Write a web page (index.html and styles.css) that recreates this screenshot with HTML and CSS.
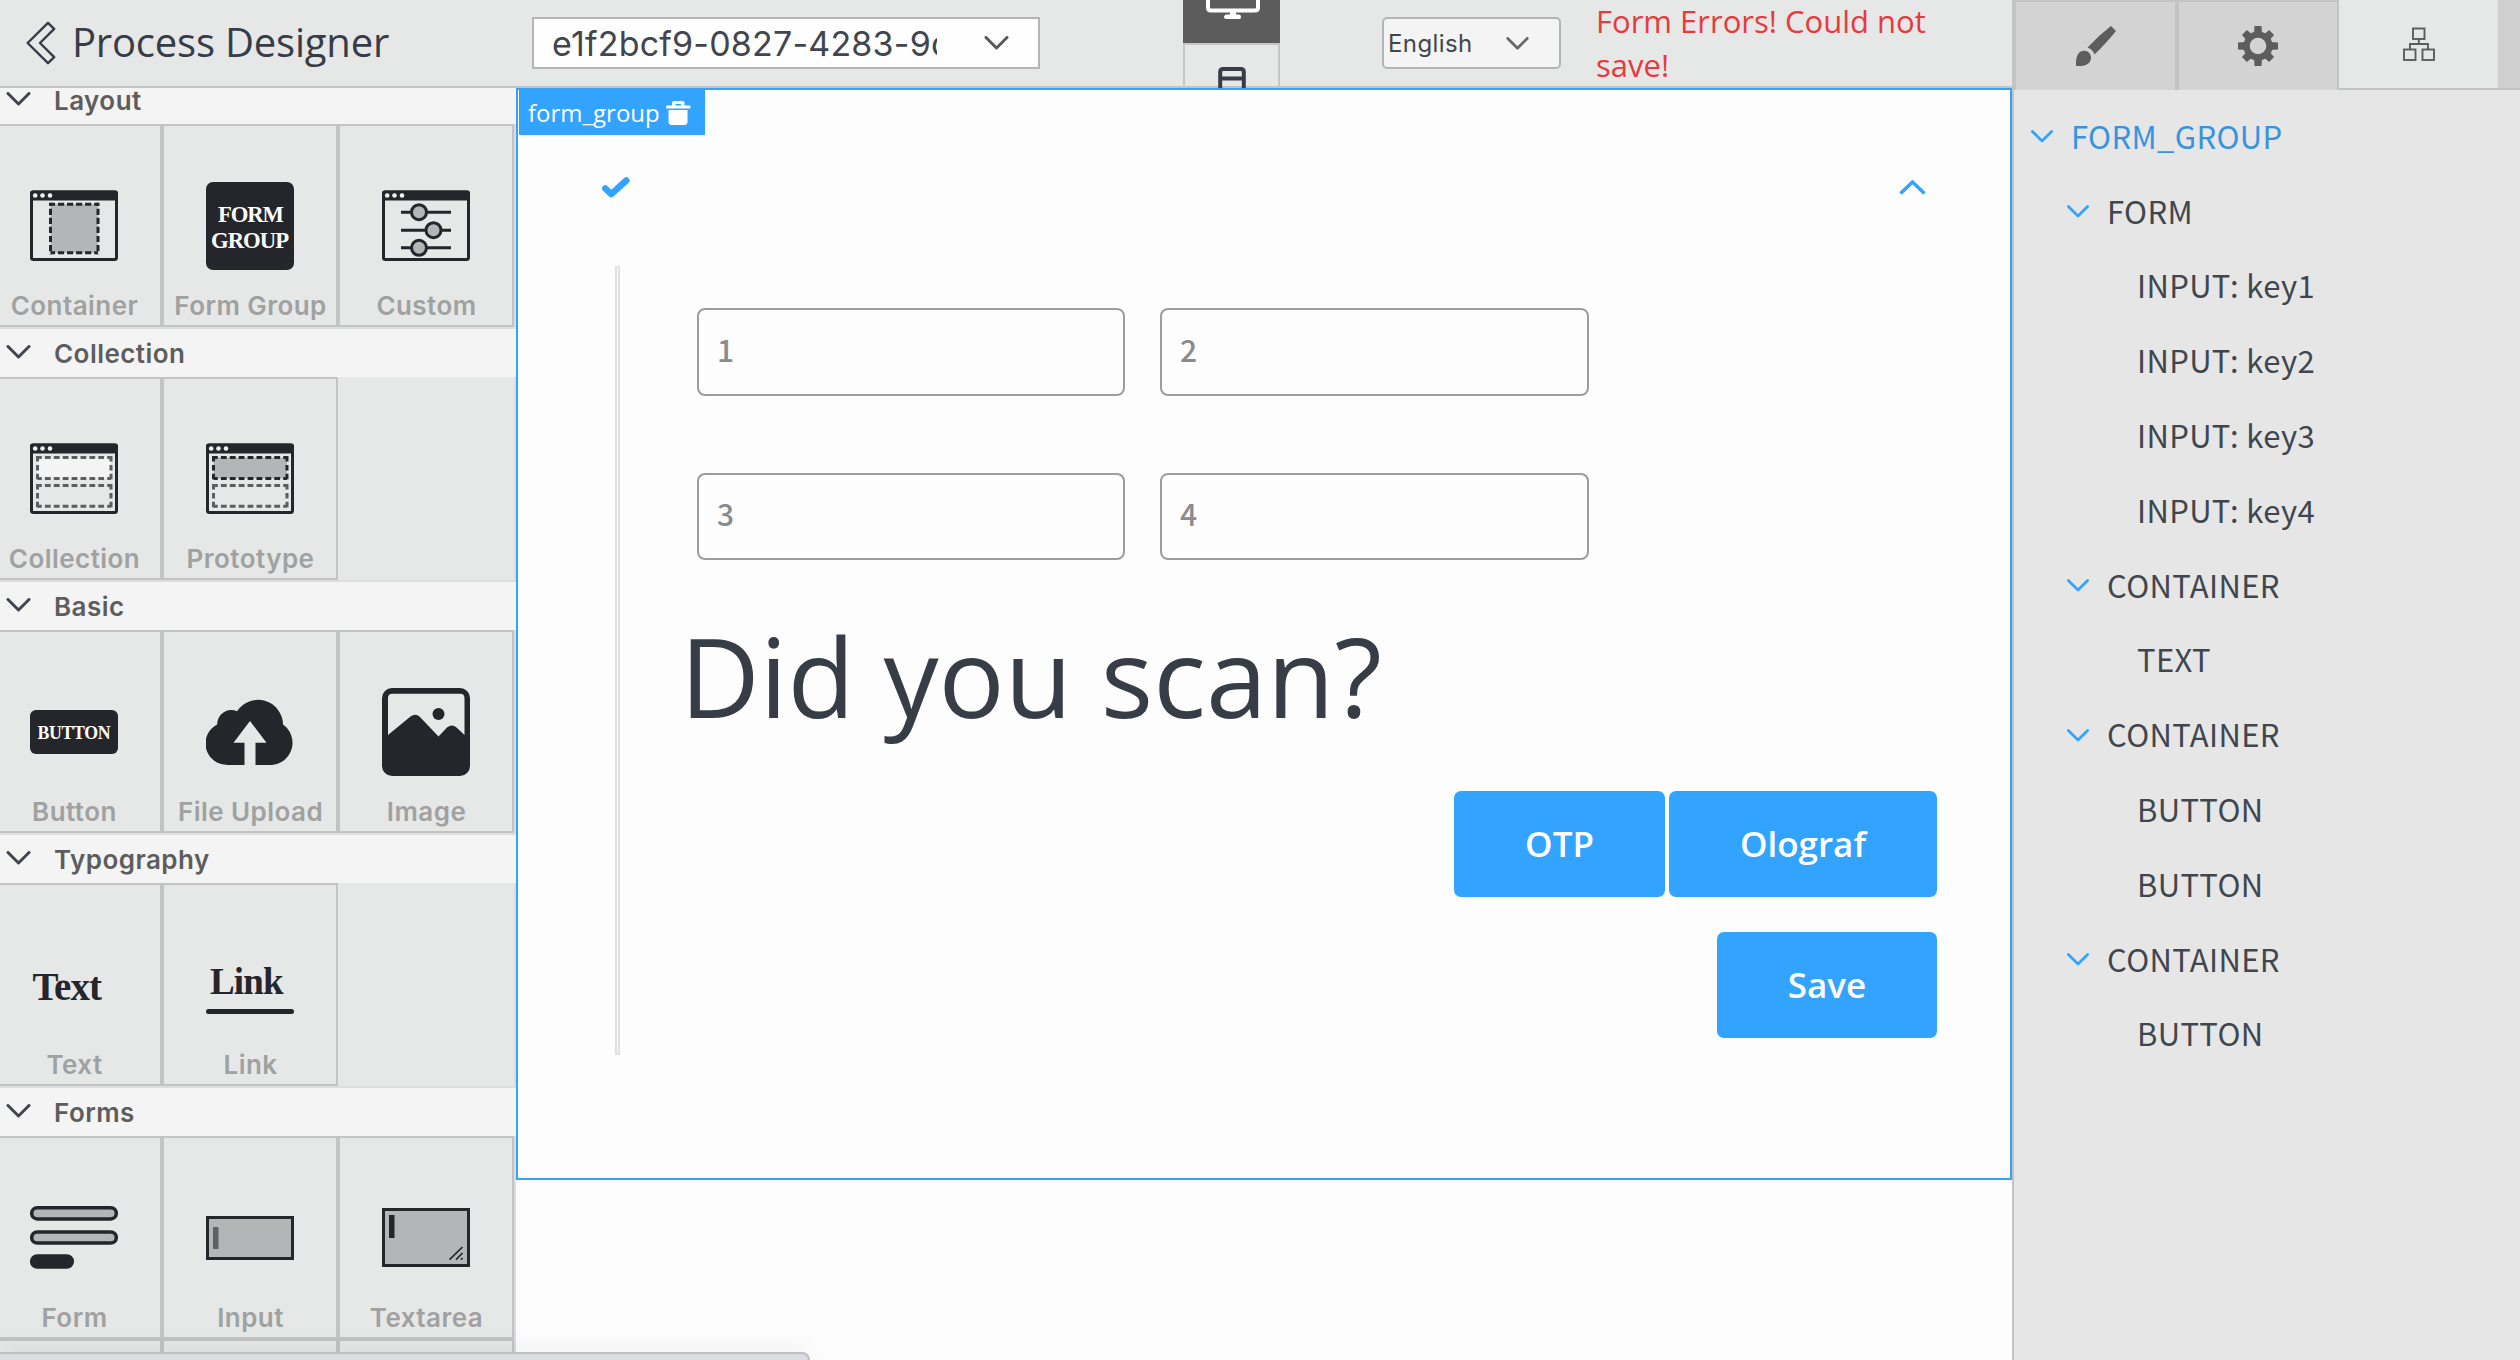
FILE: index.html
```html
<!DOCTYPE html>
<html lang="en">
<head>
<meta charset="utf-8">
<title>Process Designer</title>
<link rel="stylesheet" href="styles.css">
</head>
<body>
<svg class="sprite" aria-hidden="true">
  <symbol id="chevron" viewBox="0 0 24 14"><path d="M1.5 1.5 12 12 22.5 1.5" fill="none" stroke="currentColor" stroke-width="3" stroke-linecap="round" stroke-linejoin="round"/></symbol>
  <symbol id="window" viewBox="0 0 88 88">
    <rect x="1.5" y="10" width="85" height="67.500" rx="2" fill="none" stroke="#25262b" stroke-width="3"/>
    <path d="M0 18.500V11Q0 8.500 2.500 8.500H85.500Q88 8.500 88 11V18.500Z" fill="#25262b"/>
    <g fill="#f2f2f2"><circle cx="5.200" cy="13.500" r="2.300"/><circle cx="12.500" cy="13.500" r="2.300"/><circle cx="20" cy="13.500" r="2.300"/></g>
  </symbol>
</svg>
<div class="app">
  <div class="main">
    <header class="topbar">
      <svg class="back" viewBox="0 0 30 44"><path d="M22 1.800 28.200 7.800 14 22 28.200 36.200 22 42.200 1.600 22Z" fill="none" stroke="#373d47" stroke-width="2.400" stroke-linejoin="round"/></svg>
      <h1 class="title">Process Designer</h1>
      <div class="select process-select"><span class="select-text">e1f2bcf9-0827-4283-9c4a</span><svg class="chev"><use href="#chevron"/></svg></div>
      <div class="devices">
        <div class="device active"><svg viewBox="0 0 54 20" width="54" height="20"><path d="M2 0V7.500Q2 10.500 5 10.500H49Q52 10.500 52 7.500V0" fill="none" stroke="#fff" stroke-width="4"/><path d="M24 12H30V14.500H33Q35 14.500 35 17T33 19H21Q18 19 18 17T21 14.500H24Z" fill="#fff"/></svg></div>
        <div class="device"><svg viewBox="0 0 28 21" width="28" height="21"><path d="M2.200 21V5Q2.200 2 5.200 2H22.800Q25.800 2 25.800 5V21M2 11.500H26" fill="none" stroke="#373d47" stroke-width="4"/></svg></div>
      </div>
      <div class="select lang-select"><span>English</span><svg class="chev"><use href="#chevron"/></svg></div>
      <p class="error">Form Errors! Could not save!</p>
    </header>
    <div class="workspace">
      <aside class="palette">
        <section class="group">
          <h2 class="group-title"><svg class="chev"><use href="#chevron"/></svg>Layout</h2>
          <div class="cells">
            <div class="cell"><svg class="icon"><use href="#window"/><rect x="20.500" y="22.200" width="47.500" height="48.500" fill="#b4b5b6"/><path d="M20.500 22.200H68M20.500 70.700H68" stroke="#25262b" stroke-width="3" stroke-dasharray="6.200 2.850" stroke-dashoffset="1.600"/><path d="M20.500 20.700V72.200M68 20.700V72.200" stroke="#25262b" stroke-width="3" stroke-dasharray="6.200 2.850" stroke-dashoffset="3"/></svg><span>Container</span></div>
            <div class="cell"><svg class="icon"><rect width="88" height="88" rx="7" fill="#25262b"/><g class="glyph-light"><text x="12" y="40.300" font-size="22.700" textLength="66">FORM</text><text x="5" y="66" font-size="22.700" textLength="78">GROUP</text></g></svg><span>Form Group</span></div>
            <div class="cell"><svg class="icon"><use href="#window"/><g fill="#b4b5b6" stroke="#25262b" stroke-width="3"><path d="M19 30.200H69M19 48.200H69M19 65.800H69"/><circle cx="37" cy="30.200" r="7.500"/><circle cx="51.500" cy="48.200" r="7.500"/><circle cx="37" cy="65.800" r="7.500"/></g></svg><span>Custom</span></div>
          </div>
        </section>
        <section class="group">
          <h2 class="group-title"><svg class="chev"><use href="#chevron"/></svg>Collection</h2>
          <div class="cells">
            <div class="cell"><svg class="icon"><use href="#window"/><g stroke="#5d5e60" stroke-width="3"><rect x="7.500" y="22.500" width="73.500" height="21" fill="#f4f4f4" stroke="none"/><path fill="none" stroke-dasharray="5.800 3.100" stroke-dashoffset="1.500" d="M7.500 22.500H81M7.500 43.500H81M7.500 50.500H81M7.500 71.300H81"/><path fill="none" stroke-dasharray="5.500 3.400" d="M7.500 21V45M81 21V45M7.500 49V73M81 49V73"/></g></svg><span>Collection</span></div>
            <div class="cell"><svg class="icon"><use href="#window"/><g stroke="#5d5e60" stroke-width="3"><rect x="7.500" y="22.500" width="73.500" height="21" fill="#b4b5b6" stroke="none"/><path fill="none" stroke-dasharray="5.800 3.100" stroke-dashoffset="1.500" d="M7.500 50.500H81M7.500 71.300H81"/><path fill="none" stroke-dasharray="5.500 3.400" d="M7.500 49V73M81 49V73"/><path fill="none" stroke="#25262b" stroke-dasharray="5.800 3.100" stroke-dashoffset="1.500" d="M7.500 22.500H81M7.500 43.500H81"/><path fill="none" stroke="#25262b" stroke-dasharray="5.500 3.400" d="M7.500 21V45M81 21V45"/></g></svg><span>Prototype</span></div>
          </div>
        </section>
        <section class="group">
          <h2 class="group-title"><svg class="chev"><use href="#chevron"/></svg>Basic</h2>
          <div class="cells">
            <div class="cell"><svg class="icon"><rect y="22" width="88" height="44" rx="6" fill="#25262b"/><g class="glyph-light"><text x="7.500" y="51.300" font-size="17.800" textLength="73">BUTTON</text></g></svg><span>Button</span></div>
            <div class="cell"><svg class="icon"><path fill="#25262b" d="M22 77A22 21.500 0 0 1 11.200 36.500A14 14 0 0 1 31 23.300A25 25 0 0 1 77 36.500A22.300 22.300 0 0 1 66 77H49.500V54.700H60.500L44 33 27.500 54.700H38.500V77Z"/></svg><span>File Upload</span></div>
            <div class="cell"><svg class="icon"><rect width="88" height="88" rx="10" fill="#25262b"/><path fill="#e6e7e7" d="M6 47V10Q6 5.700 10.500 5.700H78Q82.500 5.700 82.500 10V47L74.500 39.500Q70 35.500 65 39.500L56.500 48.500 38 29Q33.500 25 28.500 28.500Z"/><circle cx="56.500" cy="26" r="6" fill="#25262b"/></svg><span>Image</span></div>
          </div>
        </section>
        <section class="group">
          <h2 class="group-title"><svg class="chev"><use href="#chevron"/></svg>Typography</h2>
          <div class="cells">
            <div class="cell"><svg class="icon"><g class="glyph-dark"><text x="2.500" y="59" font-size="39" textLength="69.500">Text</text></g></svg><span>Text</span></div>
            <div class="cell"><svg class="icon"><g class="glyph-dark"><text x="4" y="52.800" font-size="37" textLength="73.500">Link</text></g><path d="M2.500 70.500H85.500" stroke="#25262b" stroke-width="5" stroke-linecap="round"/></svg><span>Link</span></div>
          </div>
        </section>
        <section class="group">
          <h2 class="group-title"><svg class="chev"><use href="#chevron"/></svg>Forms</h2>
          <div class="cells">
            <div class="cell"><svg class="icon"><g fill="#b4b5b6" stroke="#25262b" stroke-width="3.500"><rect x="1.700" y="13.700" width="84.600" height="11.200" rx="5.600"/><rect x="1.700" y="37.900" width="84.600" height="11.200" rx="5.600"/><rect x="1.700" y="61.900" width="40.600" height="11.200" rx="5.600" fill="#25262b"/></g></svg><span>Form</span></div>
            <div class="cell"><svg class="icon"><rect x="1.500" y="23.500" width="85" height="41" fill="#b4b5b6" stroke="#25262b" stroke-width="3"/><rect x="7" y="33" width="5.500" height="22" fill="#5f6062"/></svg><span>Input</span></div>
            <div class="cell"><svg class="icon"><rect x="1.500" y="15.500" width="85" height="56" fill="#b4b5b6" stroke="#25262b" stroke-width="3"/><rect x="7" y="21" width="5.500" height="23" fill="#25262b"/><path d="M67.500 65.700 80.500 53M74 65.700 80.500 59M79 65.700 80.500 64" stroke="#25262b" stroke-width="1.700"/></svg><span>Textarea</span></div>
            <div class="cell"></div><div class="cell"></div><div class="cell"></div>
          </div>
        </section>
      </aside>
      <main class="canvas">
        <div class="form-group">
          <div class="tag">form_group<svg viewBox="0 0 25 24" width="25" height="24"><path fill="#fff" d="M6 4.500V2Q6 0 8 0H16.500Q18.500 0 18.500 2V4.500H23.500Q24.500 4.500 24.500 6T23.500 7.500H1Q0 7.500 0 6T1 4.500ZM9.500 4.500H15V3H9.500ZM2.500 9H21.500V20.500Q21.500 24 18 24H6Q2.500 24 2.500 20.500Z"/></svg></div>
          <div class="step-head">
            <svg viewBox="0 0 28 21" width="28" height="21"><path d="M3.300 11.500 9.300 17.200 24.300 3.500" fill="none" stroke="#32a4ff" stroke-width="6.500" stroke-linecap="round" stroke-linejoin="round"/></svg>
            <svg viewBox="0 0 27 15" width="27" height="15"><path d="M1.500 13.500 13.500 2 25.500 13.500" fill="none" stroke="#32a4ff" stroke-width="3.500"/></svg>
          </div>
          <div class="step-body">
            <div class="rail"></div>
            <div class="content">
              <div class="fields"><div class="field">1</div><div class="field">2</div><div class="field">3</div><div class="field">4</div></div>
              <p class="question">Did you scan?</p>
              <div class="actions"><button class="btn otp">OTP</button><button class="btn olograf">Olograf</button></div>
              <div class="actions last"><button class="btn save">Save</button></div>
            </div>
          </div>
        </div>
      </main>
    </div>
  </div>
  <aside class="inspector">
    <nav class="tabs">
      <div class="tab"><svg viewBox="0 0 40 40" width="40" height="40"><path fill="#5d5d5d" d="M35 0 40 5Q29 18.500 18.500 28.500Q17 23.500 11.500 21.500Q22 10 35 0ZM.2 40C-.5 33 1 25.500 7.500 24.700C12.500 24.200 15.500 28.500 15 32.500C14.200 38 9 40.700.2 40Z"/></svg></div>
      <div class="tab"><svg viewBox="-20 -20 40 40" width="40" height="40"><g fill="#5d5d5d"><path id="tooth" d="M-4-12-3.500-20H3.500L4-12V12L3.500 20H-3.500L-4 12Z"/><use href="#tooth" transform="rotate(45) scale(1 .96)"/><use href="#tooth" transform="rotate(90)"/><use href="#tooth" transform="rotate(135) scale(1 .96)"/><circle r="14.600"/></g><circle r="8.300" fill="#d3d3d3"/></svg></div>
      <div class="tab current"><svg viewBox="0 0 32 34" width="32" height="34"><g fill="none" stroke="#5d5d5d" stroke-width="1.900"><rect x="10" y="1.500" width="11.500" height="10.500"/><rect x="1" y="22.500" width="11.500" height="10.500"/><rect x="19.500" y="22.500" width="11.500" height="10.500"/><path d="M15.800 12V17M7 22V17H25V22"/></g></svg></div>
      <div class="tab-rest"></div>
    </nav>
    <div class="tree">
      <div class="node l1"><svg class="chev"><use href="#chevron"/></svg>FORM_GROUP</div>
      <div class="node l2"><svg class="chev"><use href="#chevron"/></svg>FORM</div>
      <div class="node l3">INPUT: key1</div>
      <div class="node l3">INPUT: key2</div>
      <div class="node l3">INPUT: key3</div>
      <div class="node l3">INPUT: key4</div>
      <div class="node l2"><svg class="chev"><use href="#chevron"/></svg>CONTAINER</div>
      <div class="node l3">TEXT</div>
      <div class="node l2"><svg class="chev"><use href="#chevron"/></svg>CONTAINER</div>
      <div class="node l3">BUTTON</div>
      <div class="node l3">BUTTON</div>
      <div class="node l2"><svg class="chev"><use href="#chevron"/></svg>CONTAINER</div>
      <div class="node l3">BUTTON</div>
    </div>
  </aside>
</div>
<div class="status-bubble"></div>
</body>
</html>
```

FILE: styles.css
```css
* { box-sizing: border-box; margin: 0; padding: 0; }
body { width: 2520px; height: 1360px; overflow: hidden; background: #fdfdfd; color: #373d47; font-family: "Open Sans", sans-serif; position: relative; }
svg { display: block; flex: none; }
.sprite { position: absolute; width: 0; height: 0; }
.app { display: flex; height: 1360px; }
.main { width: 2012px; flex: none; display: flex; flex-direction: column; }

/* Top bar */
.topbar { height: 88px; flex: none; display: flex; align-items: center; background: #e6e7e7; border-bottom: 2px solid #c3c3c3; padding-left: 26px; }
.back { width: 30px; height: 44px; }
.title { width: 460px; margin-left: 16px; padding-bottom: 2px; font-size: 40px; font-weight: 400; line-height: 50px; letter-spacing: -.2px; white-space: nowrap; flex: none; }
.select { display: flex; align-items: center; height: 52px; border: 2px solid #b5b5b5; font-family: Inter, sans-serif; color: #41464e; flex: none; }
.process-select { width: 508px; padding-left: 18px; background: #fefefe; font-size: 34px; letter-spacing: .2px; }
.select-text { width: 385px; overflow: hidden; white-space: nowrap; line-height: 44px; padding-top: 1px; }
.process-select .chev { width: 25px; height: 14px; margin-left: 47px; color: #58595b; }
.devices { align-self: flex-start; width: 97px; margin-left: 143px; flex: none; }
.device { height: 45px; display: flex; align-items: flex-end; justify-content: center; border: 2px solid #c5c6ca; border-bottom: 0; }
.device.active { height: 43px; align-items: flex-start; border: 0; background: #5c5c5c; padding-left: 2px; }
.lang-select { width: 179px; margin-left: 102px; padding-left: 4px; background: #f4f4f4; border-radius: 5px; font-size: 24px; letter-spacing: .4px; }
.lang-select .chev { width: 23px; height: 13px; margin-left: 33px; color: #66686c; }
.error { width: 360px; margin-left: 35px; color: #e83a3a; font-size: 31px; line-height: 44px; }

.workspace { display: flex; flex: 1; min-height: 0; }

/* Component palette */
.palette { width: 516px; flex: none; overflow: hidden; background: #e6e7e7; font-family: Inter, sans-serif; }
.group { border-bottom: 2px solid #dcdee2; border-right: 2px solid #d9dce0; }
.group:first-child { margin-top: -12px; }
.group-title { display: flex; align-items: center; width: 516px; height: 48px; padding: 1px 0 0 6px; background: #f4f4f4; color: #5d5d5d; font-size: 26px; font-weight: 600; letter-spacing: .45px; }
.group-title .chev { width: 25px; height: 14px; margin: -4px 23px 0 0; color: #41464e; }
.cells { display: grid; grid-template-columns: repeat(3, 176px); margin-left: -14px; }
.cell { height: 203px; display: flex; flex-direction: column; align-items: center; padding-top: 56px; border: 2px solid #c3c3c3; color: #a0a1a1; font-size: 26px; font-weight: 600; letter-spacing: .45px; line-height: 32px; white-space: nowrap; }
.cell span { margin-top: 20px; padding-left: 1px; }
.icon { width: 88px; height: 88px; }
.glyph-light, .glyph-dark { font-family: "Liberation Serif", serif; font-weight: 700; letter-spacing: 0; }
.glyph-light { fill: #fff; }
.glyph-dark { fill: #25262b; }

/* Canvas */
.canvas { flex: 1; }
.form-group { position: relative; height: 1092px; border: 2px solid #38a2f5; }
.tag { position: absolute; left: 1px; top: 0; width: 186px; height: 45px; display: flex; align-items: center; gap: 6px; padding: 0 0 0 9px; background: #32a4ff; color: #fff; font-size: 24px; }
.step-head { display: flex; justify-content: space-between; align-items: center; height: 176px; padding: 18px 84px 0; }
.step-body { display: flex; height: 789px; padding-left: 97px; }
.rail { width: 5px; border: 2px solid #e0e0e3; }
.content { width: 1240px; margin-left: 77px; padding-top: 42px; }
.fields { display: grid; grid-template-columns: 428px 429px; grid-template-rows: 88px 87px; gap: 77px 35px; }
.field { display: flex; align-items: center; padding: 0 0 7px 18px; border: 2px solid #9d9d9d; border-radius: 8px; color: #8a8b8d; font: 500 30px "Noto Sans CJK SC", sans-serif; }
.question { margin: 40px 0 0 -17px; font-size: 110px; line-height: 150px; }
.actions { display: flex; justify-content: flex-end; gap: 4px; margin-top: 41px; }
.actions.last { margin-top: 35px; }
.btn { height: 106px; padding-bottom: 2px; border: 0; border-radius: 7px; background: #32a4ff; color: #fff; font: 600 35px "Open Sans", sans-serif; }
.otp { width: 211px; }
.olograf { width: 268px; }
.save { width: 220px; }

/* Inspector */
.inspector { width: 508px; flex: none; display: flex; flex-direction: column; background: #e6e6e6; }
.tabs { display: flex; height: 90px; flex: none; }
.tab { display: flex; align-items: center; justify-content: center; width: 163px; background: #d3d3d3; border: 2px solid #c3c3c3; border-width: 2px 0 0 4px; }
.tab + .tab { width: 162px; }
.tab.tab.current { width: 161px; background: #e6e7e7; border-width: 0 0 2px 2px; }
.tab-rest { flex: 1; background: #cfcfcf; border-bottom: 2px solid #c3c3c3; }
.tree { flex: 1; padding-top: 8px; border-left: 2px solid #bfc2c6; font-family: "Noto Sans CJK SC", sans-serif; font-size: 31px; letter-spacing: .35px; color: #41464e; }
.node { display: flex; align-items: center; height: 74.8px; white-space: nowrap; }
.node .chev { width: 22px; height: 13px; margin: 3px 18px 0 0; color: #32a4ff; }
.l1 { padding-left: 17px; color: #3893de; }
.l2 { padding-left: 53px; }
.l3 { padding-left: 123px; }

.status-bubble { position: absolute; left: -2px; bottom: 0; width: 812px; height: 8px; background: #dbdce0; border: solid #bfbfc2; border-width: 2px 2px 0 0; border-radius: 0 8px 0 0; box-shadow: 0 0 24px rgba(0, 0, 0, .12); }
```
